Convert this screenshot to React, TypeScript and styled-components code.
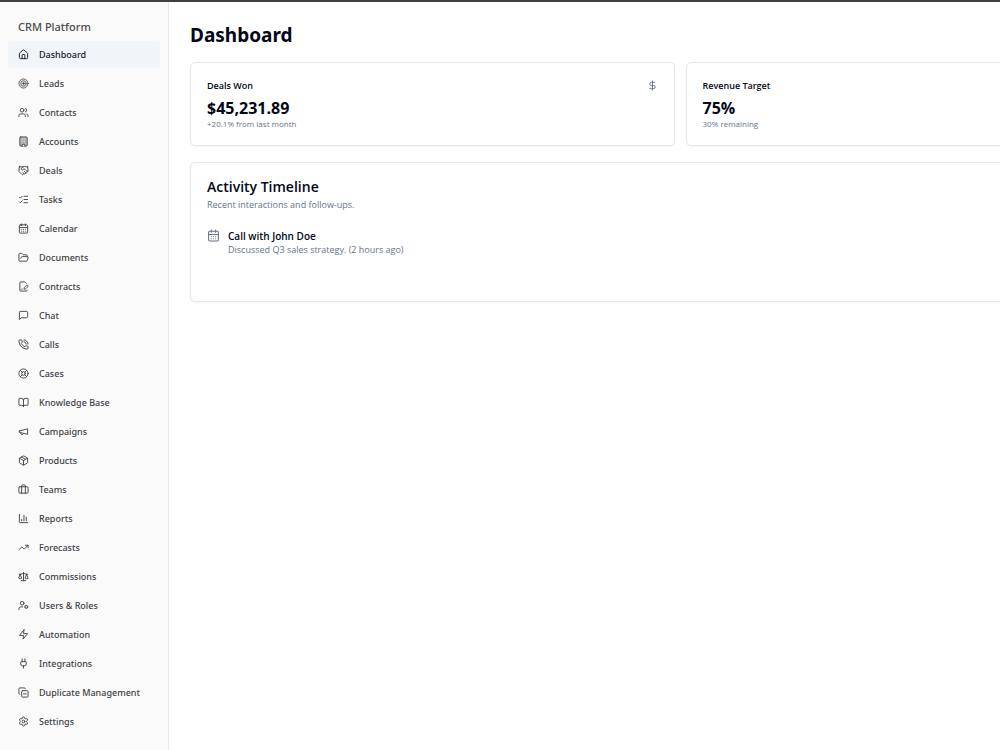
import React from "react";
import styled, { createGlobalStyle } from "styled-components";
import {
  House, Users, Handshake, ListChecks, CalendarDays, FolderOpen, FilePenLine,
  PhoneCall, LifeBuoy, BookOpen, Package, Briefcase,
  ChartColumn, TrendingUp, Scale, Plug, CopyMinus, Settings, DollarSign,
} from "lucide-react";

const GlobalStyle = createGlobalStyle`
  *, *::before, *::after { box-sizing: border-box; }
  body {
    margin: 0;
    background: #ffffff;
    color: #020817;
    font-family: "Open Sans", "Noto Sans", sans-serif;
    overflow-x: hidden;
  }
  h1, h2, h3, p, ul { margin: 0; padding: 0; }
`;

const Shell = styled.div`
  display: flex;
  min-height: 100vh;
  border-top: 2px solid #3f3f3f;
`;

const Sidebar = styled.aside`
  flex: none;
  width: 169px;
  padding: 16px 8px;
  background: #fafafa;
  border-right: 1px solid #e5e7eb;
  font-family: "Noto Sans", sans-serif;
`;

const Brand = styled.div`
  padding: 0 10px;
  font-size: 11px;
  line-height: 18px;
  font-weight: 500;
  color: #4b4b50;
  margin-bottom: 5px;
`;

const NavList = styled.ul`
  display: flex;
  flex-direction: column;
  gap: 2px;
  list-style: none;
`;

const NavLink = styled.a<{ $active?: boolean }>`
  display: flex;
  align-items: center;
  gap: 10px;
  height: 27px;
  padding: 0 10px;
  border-radius: 4px;
  background: ${(p) => (p.$active ? "#f1f5f9" : "transparent")};
  color: ${(p) => (p.$active ? "#0f172a" : "#3f3f46")};
  font-size: 9px;
  font-weight: 500;
  text-decoration: none;
  white-space: nowrap;
`;

const Main = styled.main`
  flex: 1;
  min-width: 0;
  padding: 20px 0 20px 21px;
  overflow: hidden;
`;

const Title = styled.h1`
  font-family: "Noto Sans", sans-serif;
  font-size: 19px;
  line-height: 26px;
  font-weight: 700;
  margin-bottom: 14px;
`;

const Board = styled.div`
  display: flex;
  flex-direction: column;
  gap: 16px;
  width: 121%;
`;

const StatGrid = styled.div`
  display: grid;
  grid-template-columns: 1fr 1fr;
  gap: 11px;
`;

const Card = styled.section`
  padding: 16px;
  background: #ffffff;
  border: 1px solid #e2e8f0;
  border-radius: 5px;
  box-shadow: 0 1px 2px rgba(0, 0, 0, 0.05);
`;

const StatHeader = styled.div`
  display: flex;
  align-items: center;
  justify-content: space-between;
  margin-bottom: 5px;
  color: #64748b;
`;

const StatLabel = styled.h2`
  font-size: 9px;
  line-height: 13px;
  font-weight: 600;
  color: #020817;
`;

const StatValue = styled.p`
  font-size: 16px;
  line-height: 22px;
  font-weight: 700;
`;

const StatNote = styled.p`
  font-size: 8px;
  line-height: 10px;
  color: #64748b;
`;

const TimelineCard = styled(Card)`
  min-height: 140px;
`;

const CardTitle = styled.h2`
  font-size: 14px;
  line-height: 16px;
  font-weight: 600;
`;

const Muted = styled.p`
  font-size: 9px;
  line-height: 13px;
  color: #64748b;
`;

const CardIntro = styled.div`
  display: flex;
  flex-direction: column;
  gap: 3px;
  margin-bottom: 18px;
`;

const Activity = styled.article`
  display: flex;
  gap: 8px;
  color: #64748b;
`;

const ActivityTitle = styled.h3`
  font-size: 10px;
  line-height: 14px;
  font-weight: 600;
  color: #020817;
`;

type IconProps = { size?: number; children?: React.ReactNode };

const Outline = ({ size = 24, children }: IconProps) => (
  <svg
    width={size} height={size} viewBox="0 0 24 24" fill="none" stroke="currentColor"
    strokeWidth="2" strokeLinecap="round" strokeLinejoin="round" aria-hidden
  >
    {children}
  </svg>
);

const TargetIcon = ({ size }: IconProps) => (
  <Outline size={size}>
    <circle cx="12" cy="12" r="10" fill="currentColor" fillOpacity="0.15" strokeOpacity="0.8" />
    <circle cx="12" cy="12" r="5.8" strokeOpacity="0.7" />
    <circle cx="12" cy="12" r="1.6" fill="currentColor" strokeOpacity="0.8" />
  </Outline>
);

const BuildingIcon = ({ size }: IconProps) => (
  <Outline size={size}>
    <rect x="4" y="2" width="16" height="20" rx="2" fill="currentColor" fillOpacity="0.3" />
    <path d="M9 22v-4h6v4" fill="#fafafa" />
    <path d="M8 6h.01M12 6h.01M16 6h.01M8 10h.01M12 10h.01M16 10h.01M8 14h.01M12 14h.01M16 14h.01" strokeOpacity="0.3" />
  </Outline>
);

const MessageIcon = ({ size }: IconProps) => (
  <Outline size={size}>
    <path d="M21 15a2 2 0 0 1-2 2H7l-4 4V5a2 2 0 0 1 2-2h14a2 2 0 0 1 2 2z" />
  </Outline>
);

const MegaphoneIcon = ({ size }: IconProps) => (
  <Outline size={size}>
    <path d="m3 11 18-5v12L3 14v-3z" />
    <path d="M11.6 16.8a3 3 0 1 1-5.8-1.6" />
  </Outline>
);

const BoltIcon = ({ size }: IconProps) => (
  <Outline size={size}>
    <polygon points="13 2 3 14 12 14 11 22 21 10 12 10 13 2" />
  </Outline>
);

const UserGearIcon = ({ size }: IconProps) => (
  <Outline size={size}>
    <circle cx="9" cy="7" r="4" />
    <path d="M10 15H6a4 4 0 0 0-4 4v2" />
    <circle cx="18" cy="15" r="3" />
    <path
      d="m21.7 16.4-.9-.3m-5.6-2.2-.9-.3m2.3 5.1.3-.9m2.2-5.6.3-.9m.2 7.4-.4-1m-2.4-5.4-.4-1m-2.1 5.3 1-.4m5.4-2.4 1-.4"
      strokeOpacity="0.4"
    />
  </Outline>
);

const items: { label: string; icon: React.ComponentType<{ size?: number }> }[] = [
  { label: "Dashboard", icon: House },
  { label: "Leads", icon: TargetIcon },
  { label: "Contacts", icon: Users },
  { label: "Accounts", icon: BuildingIcon },
  { label: "Deals", icon: Handshake },
  { label: "Tasks", icon: ListChecks },
  { label: "Calendar", icon: CalendarDays },
  { label: "Documents", icon: FolderOpen },
  { label: "Contracts", icon: FilePenLine },
  { label: "Chat", icon: MessageIcon },
  { label: "Calls", icon: PhoneCall },
  { label: "Cases", icon: LifeBuoy },
  { label: "Knowledge Base", icon: BookOpen },
  { label: "Campaigns", icon: MegaphoneIcon },
  { label: "Products", icon: Package },
  { label: "Teams", icon: Briefcase },
  { label: "Reports", icon: ChartColumn },
  { label: "Forecasts", icon: TrendingUp },
  { label: "Commissions", icon: Scale },
  { label: "Users & Roles", icon: UserGearIcon },
  { label: "Automation", icon: BoltIcon },
  { label: "Integrations", icon: Plug },
  { label: "Duplicate Management", icon: CopyMinus },
  { label: "Settings", icon: Settings },
];

export default function App() {
  return (
    <>
      <GlobalStyle />
      <Shell>
        <Sidebar>
          <Brand>CRM Platform</Brand>
          <nav aria-label="Main">
            <NavList>
              {items.map(({ label, icon: Icon }, i) => (
                <li key={label}>
                  <NavLink href="#" $active={i === 0} aria-current={i === 0 ? "page" : undefined}>
                    <Icon size={11} />
                    {label}
                  </NavLink>
                </li>
              ))}
            </NavList>
          </nav>
        </Sidebar>
        <Main>
          <Title>Dashboard</Title>
          <Board>
            <StatGrid>
              <Card>
                <StatHeader>
                  <StatLabel>Deals Won</StatLabel>
                  <DollarSign size={11} aria-hidden />
                </StatHeader>
                <StatValue>$45,231.89</StatValue>
                <StatNote>+20.1% from last month</StatNote>
              </Card>
              <Card>
                <StatHeader>
                  <StatLabel>Revenue Target</StatLabel>
                </StatHeader>
                <StatValue>75%</StatValue>
                <StatNote>30% remaining</StatNote>
              </Card>
            </StatGrid>
            <TimelineCard>
              <CardIntro>
                <CardTitle>Activity Timeline</CardTitle>
                <Muted>Recent interactions and follow-ups.</Muted>
              </CardIntro>
              <Activity>
                <CalendarDays size={13} aria-hidden />
                <div>
                  <ActivityTitle>Call with John Doe</ActivityTitle>
                  <Muted>Discussed Q3 sales strategy. (2 hours ago)</Muted>
                </div>
              </Activity>
            </TimelineCard>
          </Board>
        </Main>
      </Shell>
    </>
  );
}
